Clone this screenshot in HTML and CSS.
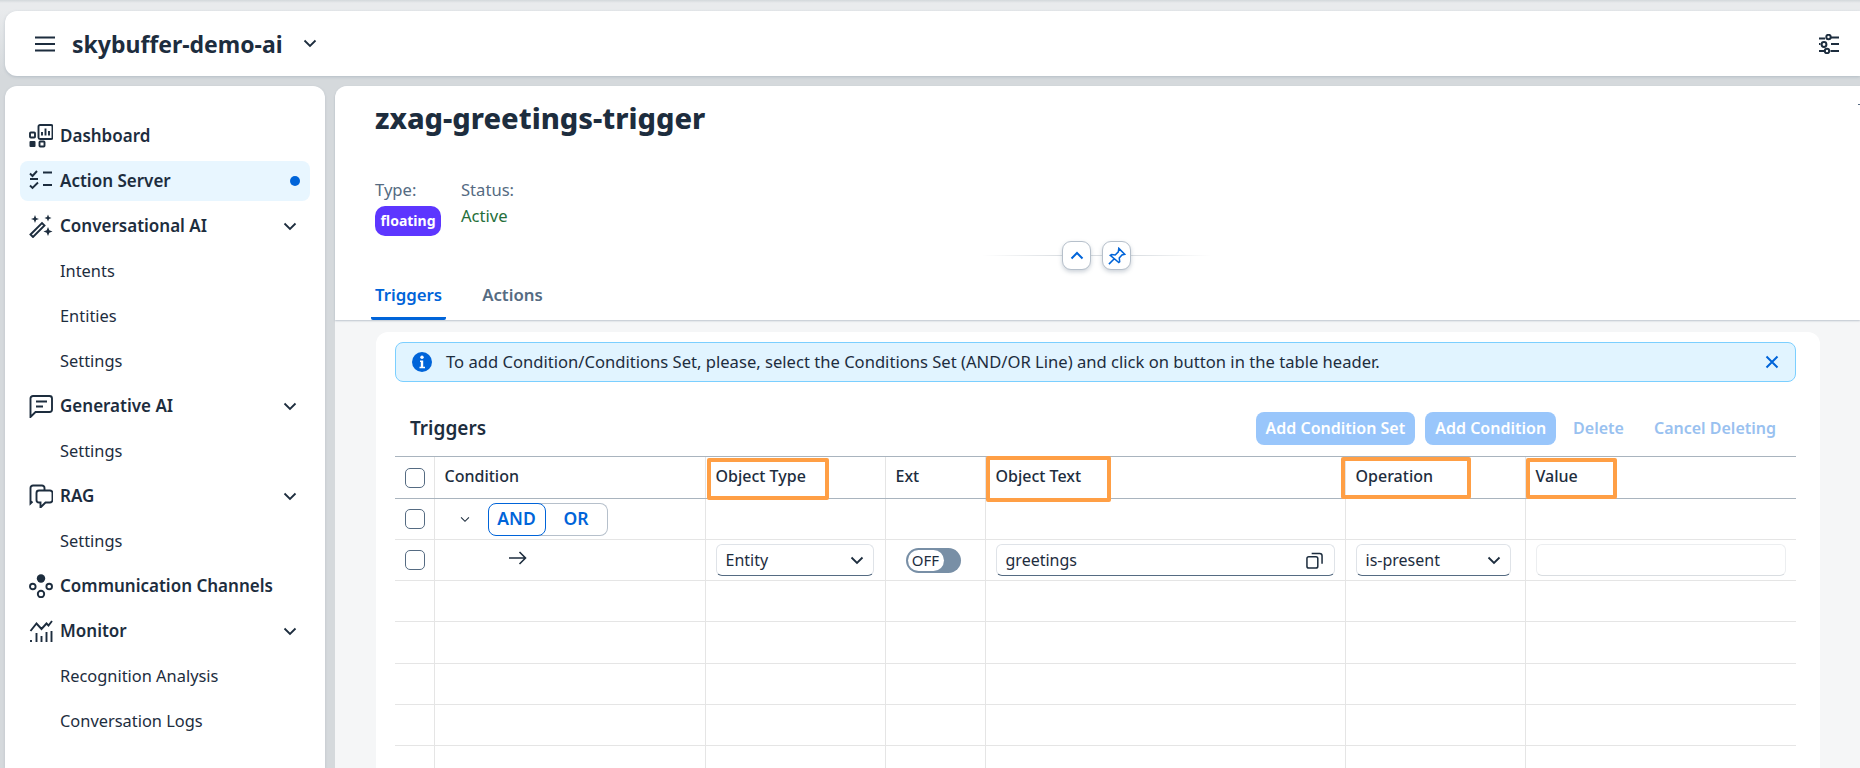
FILE: index.html
```html
<!DOCTYPE html>
<html lang="en">
<head>
<meta charset="utf-8">
<title>zxag-greetings-trigger</title>
<link rel="stylesheet" href="styles.css">
</head>
<body>
<header class="topbar">
  <svg class="burger" viewBox="0 0 20 16"><path d="M0 1.500h20M0 8h20M0 14.500h20"/></svg>
  <span class="tenant">skybuffer-demo-ai</span>
  <svg class="chev tenant-chev" viewBox="0 0 14 9"><path d="M1.500 1.500 7 7l5.500-5.500"/></svg>
  <svg class="tune" viewBox="0 0 20 20"><g fill="none" stroke="#1d2d3e" stroke-width="2"><path d="M0 4.500h6M12 3.500h8M12 10h8M0 10h1.500M0 17h5M11.500 17h8.500"/><circle cx="9.500" cy="3" r="2.200"/><circle cx="5" cy="10.500" r="2.400"/><circle cx="8" cy="17" r="2.200"/></g></svg>
</header>
<div class="workspace">
  <nav class="sidebar">
    <a class="nav-item group"><svg class="ico" viewBox="0 0 24 24"><rect x="9.500" y="1" width="14" height="14" rx="1.500"/><path d="M13 11.500V8M16.500 11.500V4.500M20 11.500V7"/><rect x="1" y="8.500" width="5" height="5" rx=".8"/><rect class="f" x=".5" y="17" width="6" height="6" rx="1"/><rect x="10.500" y="17.500" width="5" height="5" rx=".8"/></svg><span>Dashboard</span></a>
    <a class="nav-item group active"><svg class="ico" viewBox="0 0 24 24"><path d="M1 4.500 3.500 7 8 2M1 10h8M1 16.500 3.500 19 9 13.500M14 3.500h9M14 16h9"/></svg><span>Action Server</span><i class="dot"></i></a>
    <a class="nav-item group"><svg class="ico" viewBox="0 0 24 24"><path d="M1.500 20.500 13 9l2.500 2.500L4 23z"/><path class="f" d="M6 1l1.100 2.900L10 5 7.100 6.100 6 9 4.900 6.100 2 5l2.900-1.100zM19 .5l1 2.500 2.500 1-2.500 1-1 2.500-1-2.500-2.500-1 2.500-1zM19 13l1.300 3.200 3.200 1.300-3.200 1.300L19 22l-1.300-3.200-3.200-1.300 3.200-1.300z"/></svg><span>Conversational AI</span><svg class="chev nav-chev" viewBox="0 0 14 9"><path d="M1.500 1.500 7 7l5.500-5.500"/></svg></a>
    <a class="nav-item sub"><span>Intents</span></a>
    <a class="nav-item sub"><span>Entities</span></a>
    <a class="nav-item sub"><span>Settings</span></a>
    <a class="nav-item group"><svg class="ico" viewBox="0 0 24 24"><path d="M1.500 23V4.500A2.500 2.500 0 0 1 4 2h16.500A2.500 2.500 0 0 1 23 4.500v11a2.500 2.500 0 0 1-2.500 2.500H6.500z"/><path d="M7 7.500h11M7 12.500h7"/></svg><span>Generative AI</span><svg class="chev nav-chev" viewBox="0 0 14 9"><path d="M1.500 1.500 7 7l5.500-5.500"/></svg></a>
    <a class="nav-item sub"><span>Settings</span></a>
    <a class="nav-item group"><svg class="ico" viewBox="0 0 24 24"><path d="M3.500 17.500 1.500 19.500V4A2.500 2.500 0 0 1 4 1.500h9A2.500 2.500 0 0 1 15.500 4v2"/><path d="M11.500 23.500v-5H10A2.500 2.500 0 0 1 7.500 16V9A2.500 2.500 0 0 1 10 6.500h11A2.500 2.500 0 0 1 23.500 9v7a2.500 2.500 0 0 1-2.500 2.500h-4.500z"/></svg><span>RAG</span><svg class="chev nav-chev" viewBox="0 0 14 9"><path d="M1.500 1.500 7 7l5.500-5.500"/></svg></a>
    <a class="nav-item sub"><span>Settings</span></a>
    <a class="nav-item group"><svg class="ico" viewBox="0 0 24 24"><circle class="f" cx="12" cy="4.500" r="4.200"/><circle cx="3.800" cy="12.500" r="2.800"/><circle cx="20.200" cy="12.500" r="2.800"/><circle cx="12" cy="20" r="3.200"/></svg><span>Communication Channels</span></a>
    <a class="nav-item group"><svg class="ico" viewBox="0 0 24 24"><path d="M1.500 12 7.500 4.500l5 5.500 5-5.500 2 2L23 2M2 21v2M7.500 14v9M12.500 17v6M17.500 13v10M22.500 12v11"/></svg><span>Monitor</span><svg class="chev nav-chev" viewBox="0 0 14 9"><path d="M1.500 1.500 7 7l5.500-5.500"/></svg></a>
    <a class="nav-item sub"><span>Recognition Analysis</span></a>
    <a class="nav-item sub"><span>Conversation Logs</span></a>
  </nav>
  <main class="main">
    <section class="object-header">
      <i class="corner-mark"></i>
      <h1 class="title">zxag-greetings-trigger</h1>
      <div class="meta">
        <div class="meta-col type-col"><span class="label">Type:</span><span class="badge">floating</span></div>
        <div class="meta-col"><span class="label">Status:</span><span class="active-state">Active</span></div>
      </div>
      <div class="collapse-row">
        <div class="collapse-line">
          <button class="round-btn"><svg viewBox="0 0 14 10"><path d="M1.500 7.500 7 2l5.500 5.500"/></svg></button>
          <button class="round-btn"><svg viewBox="0 0 20 20"><path d="M1 19 7 13M12 1.500l6.500 6.500-3 .8-3 3.500.5 4-1 1L2.500 9.300l1.500-1 4 .5 3.500-3.500z"/></svg></button>
        </div>
      </div>
      <div class="tabs">
        <a class="tab selected">Triggers</a>
        <a class="tab">Actions</a>
      </div>
    </section>
    <section class="body-area">
      <div class="card">
        <div class="strip">
          <svg class="info" viewBox="0 0 20 20"><circle cx="10" cy="10" r="10" fill="#0064d9"/><circle cx="10" cy="5.300" r="1.700" fill="#fff"/><path d="M8 8.500h3.200v6.300H13v1.500H7.500v-1.500h1.300v-4.800H8z" fill="#fff"/></svg>
          <span class="strip-text">To add Condition/Conditions Set, please, select the Conditions Set (AND/OR Line) and click on button in the table header.</span>
          <svg class="strip-close" viewBox="0 0 14 14"><path d="M1.500 1.500l11 11M12.500 1.500l-11 11"/></svg>
        </div>
        <div class="toolbar">
          <h2 class="table-title">Triggers</h2>
          <div class="actions">
            <button class="btn solid">Add Condition Set</button>
            <button class="btn solid">Add Condition</button>
            <button class="btn ghost">Delete</button>
            <button class="btn ghost">Cancel Deleting</button>
          </div>
        </div>
        <table class="grid">
          <colgroup><col class="c1"><col class="c2"><col class="c3"><col class="c4"><col class="c5"><col class="c6"><col></colgroup>
          <thead>
            <tr>
              <th class="ck"><i class="checkbox"></i></th>
              <th>Condition</th>
              <th><span class="mark m-type"></span>Object Type</th>
              <th>Ext</th>
              <th><span class="mark m-text"></span>Object Text</th>
              <th><span class="mark m-op"></span>Operation</th>
              <th><span class="mark m-val"></span>Value</th>
            </tr>
          </thead>
          <tbody>
            <tr>
              <td class="ck"><i class="checkbox"></i></td>
              <td><div class="cond"><svg class="chev small-chev" viewBox="0 0 14 9"><path d="M1.500 1.500 7 7l5.500-5.500"/></svg><div class="seg"><span class="seg-on">AND</span><span class="seg-off">OR</span></div></div></td>
              <td></td><td></td><td></td><td></td><td></td>
            </tr>
            <tr>
              <td class="ck"><i class="checkbox"></i></td>
              <td><svg class="arrow" viewBox="0 0 18 14"><path d="M0 7h16.500M10.500 1l6 6-6 6"/></svg></td>
              <td><div class="field f-type"><span>Entity</span><svg class="chev" viewBox="0 0 14 9"><path d="M1.500 1.500 7 7l5.500-5.500"/></svg></div></td>
              <td><div class="switch"><span class="knob">OFF</span></div></td>
              <td><div class="field f-text"><span>greetings</span><svg class="copy" viewBox="0 0 18 18"><rect x="1" y="5" width="11.500" height="12" rx="2"/><path d="M6 1.500h8.500a2.500 2.500 0 0 1 2.500 2.500v8.500"/></svg></div></td>
              <td><div class="field f-op"><span>is-present</span><svg class="chev" viewBox="0 0 14 9"><path d="M1.500 1.500 7 7l5.500-5.500"/></svg></div></td>
              <td><div class="field f-val"></div></td>
            </tr>
            <tr><td></td><td></td><td></td><td></td><td></td><td></td><td></td></tr>
            <tr class="tall"><td></td><td></td><td></td><td></td><td></td><td></td><td></td></tr>
            <tr><td></td><td></td><td></td><td></td><td></td><td></td><td></td></tr>
            <tr><td></td><td></td><td></td><td></td><td></td><td></td><td></td></tr>
            <tr><td></td><td></td><td></td><td></td><td></td><td></td><td></td></tr>
          </tbody>
        </table>
      </div>
    </section>
  </main>
</div>
</body>
</html>
```
FILE: styles.css
```css
* { box-sizing: border-box; }
html, body { height: 100%; }
body {
  margin: 0;
  height: 768px;
  overflow: hidden;
  padding-top: 11px;
  background: linear-gradient(#d3d8db 0, #e9ebed 3px, #e9ebed 9px, #d5d9dc 76px);
  font-family: "Noto Sans", "Liberation Sans", sans-serif;
  color: #1d2d3e;
  display: flex;
  flex-direction: column;
}
svg { display: block; flex: none; }
.chev { fill: none; stroke: #1d2d3e; stroke-width: 1.800; width: 14px; height: 9px; }

.topbar {
  flex: none;
  height: 65px;
  margin-left: 5px;
  background: #fff;
  border-radius: 12px 0 0 12px;
  box-shadow: 0 1px 3px rgba(85, 107, 130, .25);
  display: flex;
  align-items: center;
  padding: 0 21px 0 30px;
}
.burger { width: 20px; height: 16px; fill: none; stroke: #1d2d3e; stroke-width: 2; }
.tenant { margin-left: 17px; font-size: 23px; font-weight: 700; line-height: 28px; }
.tenant-chev { margin-left: 20px; }
.tune { width: 20px; height: 20px; margin-left: auto; }

.workspace { flex: 1; min-height: 0; margin-top: 10px; padding-left: 5px; display: flex; gap: 10px; }

.sidebar {
  flex: none;
  width: 320px;
  background: #fff;
  border-radius: 12px 12px 0 0;
  box-shadow: 0 1px 3px rgba(85, 107, 130, .2);
  padding: 30px 15px 0;
  display: flex;
  flex-direction: column;
  gap: 5px;
}
.nav-item {
  height: 40px;
  flex: none;
  border-radius: 8px;
  display: flex;
  align-items: center;
  padding: 0 10px 0 9px;
  font-size: 16.400px;
  line-height: 20px;
  color: #1d2d3e;
}
.nav-item span { padding-bottom: 1px; }
.nav-item.group { font-weight: 600; font-size: 17px; }
.nav-item.group span { margin-left: 7px; }
.nav-item.sub { padding-left: 40px; font-weight: 400; }
.nav-item.active { background: #e8f6ff; }
.ico { width: 24px; height: 24px; fill: none; stroke: #1d2d3e; stroke-width: 1.900; }
.ico .f { fill: #1d2d3e; stroke: none; }
.dot { margin-left: auto; width: 10px; height: 10px; border-radius: 50%; background: #0064d9; }
.nav-chev { margin-left: auto; margin-right: 3px; }

.main {
  flex: 1;
  min-width: 0;
  display: flex;
  flex-direction: column;
  background: #f5f6f7;
  border-radius: 12px 0 0 0;
}
.object-header {
  flex: none;
  height: 234px;
  background: #fff;
  border-radius: 12px 0 0 0;
  box-shadow: 0 1px 2px rgba(85, 107, 130, .35);
  padding: 12px 0 0 40px;
  position: relative;
}
.corner-mark { position: absolute; right: 0; top: 18px; width: 2px; height: 1px; background: #556b82; }
.title { margin: 0; font-size: 29px; line-height: 40px; font-weight: 800; }
.meta { display: flex; margin-top: 42px; height: 61px; }
.meta-col { display: flex; flex-direction: column; align-items: flex-start; }
.type-col { width: 86px; }
.label { font-size: 16.600px; line-height: 20px; color: #556b82; }
.badge {
  margin-top: 6px;
  height: 30px;
  width: 66px;
  background: #5d36ff;
  border-radius: 10px;
  color: #fff;
  font-size: 14px;
  line-height: 30px;
  font-weight: 700;
  text-align: center;
}
.active-state { font-size: 16.600px; line-height: 22px; margin-top: 5px; color: #256f3a; }
.collapse-row { margin-left: -42px; display: flex; justify-content: center; }
.collapse-line {
  width: 230px;
  height: 29px;
  display: flex;
  justify-content: center;
  gap: 11px;
  background: linear-gradient(90deg, rgba(217, 221, 225, 0), #d9dde1 35%, #d9dde1 65%, rgba(217, 221, 225, 0)) center / 100% 1px no-repeat;
}
.round-btn {
  width: 29px;
  height: 29px;
  padding: 0;
  border: 1px solid #b6c0cb;
  border-radius: 9px;
  background: #fff;
  box-shadow: 0 2px 4px rgba(85, 107, 130, .3);
  display: flex;
  align-items: center;
  justify-content: center;
}
.round-btn svg { width: 14px; height: 10px; fill: none; stroke: #0064d9; stroke-width: 2; }
.round-btn + .round-btn svg { width: 18px; height: 18px; stroke-width: 1.700; }
.tabs { display: flex; margin-left: -4px; gap: 32px; }
.tab {
  padding: 0 4px;
  height: 50px;
  line-height: 50px;
  font-size: 16.800px;
  font-weight: 600;
  color: #556b82;
  border-bottom: 3px solid transparent;
  border-radius: 0 0 2px 2px;
}
.tab.selected { color: #0064d9; border-bottom-color: #0064d9; }

.body-area { flex: 1; min-height: 0; padding: 12px 40px 0 41px; }
.card { height: 100%; background: #fff; border-radius: 12px 12px 0 0; padding: 10px 24px 0 19px; }
.strip {
  height: 40px;
  background: #e1f4ff;
  border: 1px solid #7bcfff;
  border-radius: 8px;
  display: flex;
  align-items: center;
  padding: 0 16px;
}
.info { width: 20px; height: 20px; }
.strip-text { margin-left: 14px; font-size: 16.600px; line-height: 20px; padding-bottom: 1px; }
.strip-close { width: 14px; height: 14px; margin-left: auto; fill: none; stroke: #0064d9; stroke-width: 2; }

.toolbar { margin-top: 30px; height: 33px; display: flex; align-items: center; padding: 0 10px 0 15px; justify-content: space-between; }
.table-title { margin: 0 0 2px; font-size: 19px; line-height: 24px; font-weight: 600; }
.actions { display: flex; gap: 10px; }
.btn {
  height: 33px;
  border: 0;
  padding: 0 10px;
  border-radius: 8px;
  font: 600 16px/33px "Noto Sans", "Liberation Sans", sans-serif;
  white-space: nowrap;
}
.btn.solid { background: #99c6fb; color: #fff; }
.btn.ghost { background: transparent; color: #99c1f0; }
.btn.solid + .btn.ghost { margin-left: -3px; }

.grid {
  margin-top: 11px;
  width: 1401px;
  table-layout: fixed;
  border-collapse: collapse;
}
.c1 { width: 39px; }
.c2 { width: 271px; }
.c3 { width: 180px; }
.c4 { width: 100px; }
.c5 { width: 360px; }
.c6 { width: 180px; }
.grid th {
  height: 42px;
  padding: 0 9px 3px 10px;
  text-align: left;
  font-size: 16px;
  font-weight: 500;
  position: relative;
  border-top: 1px solid #a9b4be;
  border-bottom: 1px solid #a9b4be;
  border-left: 1px solid #e5e5e5;
}
.grid td { height: 41px; padding: 0 9px; border-bottom: 1px solid #e5e5e5; border-left: 1px solid #e5e5e5; font-size: 16px; }
.grid tr > :first-child { border-left: 0; }
.grid tr.tall td { height: 42px; }
.grid .ck { padding: 0 0 0 10px; }
.checkbox { display: block; width: 20px; height: 20px; border: 1px solid #556b82; border-radius: 5px; background: #fff; }
.mark { position: absolute; border: 4px solid #ff9f45; border-radius: 2px; pointer-events: none; }
.m-type { left: 1px; top: 1px; width: 122px; height: 42px; }
.m-text { left: 0; top: -1px; width: 125px; height: 46px; }
.m-op { left: -5px; top: 0; width: 130px; height: 42px; }
.m-val { left: 0; top: 1px; width: 91px; height: 41px; }

.cond { display: flex; align-items: center; margin-left: 16px; }
.small-chev { width: 10px; height: 7px; stroke-width: 1.500; }
.seg { margin-left: 18px; display: flex; height: 33px; width: 120px; font-size: 17.500px; font-weight: 600; color: #0064d9; line-height: 29px; }
.seg-on { width: 58px; text-align: center; border: 1px solid #0064d9; border-radius: 8px; position: relative; background: #fff; }
.seg-off { flex: 1; margin-left: -8px; padding-left: 8px; text-align: center; border: 1px solid #b6c0cb; border-left: 0; border-radius: 0 8px 8px 0; }
.arrow { width: 18px; height: 14px; fill: none; stroke: #1d2d3e; stroke-width: 1.600; margin-left: 65px; margin-top: -4px; }

.field {
  height: 32px;
  border: 1px solid #dfe3e8;
  border-bottom: 1px solid #556b82;
  border-radius: 6px;
  background: #fff;
  display: flex;
  align-items: center;
  justify-content: space-between;
  padding: 0 9px;
  font-size: 16px;
  line-height: 20px;
}
.f-type { width: 158px; margin-left: 1px; }
.f-text { width: 339px; margin-left: 1px; }
.f-op { width: 155px; margin-left: 1px; }
.f-val { width: 250px; margin-left: 1px; border-color: #eceef0; border-bottom-color: #d9dde1; }
.copy { width: 17px; height: 17px; fill: none; stroke: #1d2d3e; stroke-width: 1.600; margin-right: 2px; }
.switch { width: 55px; height: 25px; margin-left: 11px; border-radius: 13px; background: #788fa6; padding: 2px; }
.knob { display: block; width: 36px; height: 21px; background: #fff; border-radius: 11px; text-align: center; font-size: 15px; line-height: 20px; }
```
